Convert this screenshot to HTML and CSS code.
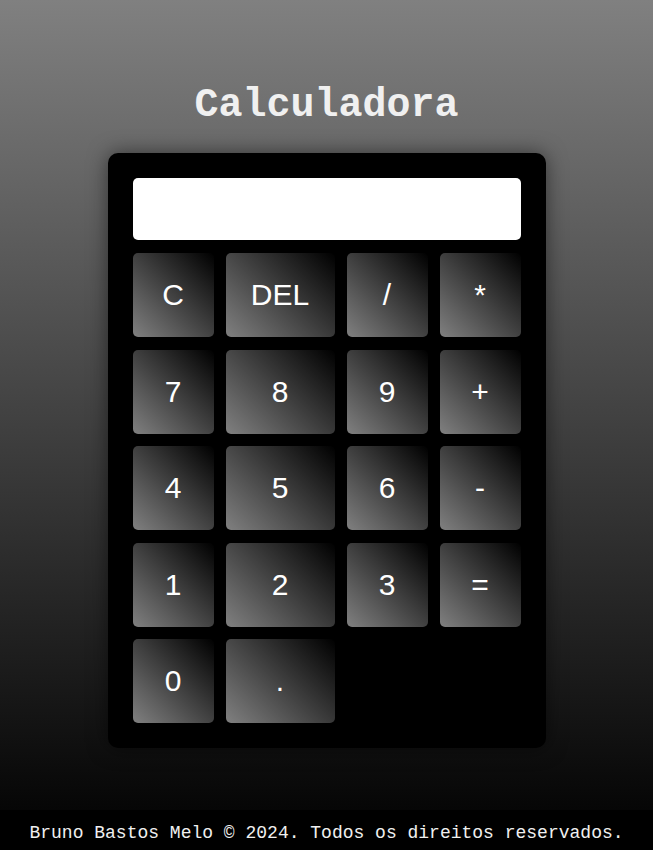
FILE: index.html
```html
<!DOCTYPE html>
<html lang="pt-BR">
<head>
<meta charset="utf-8">
<title>Calculadora</title>
<link rel="stylesheet" href="styles.css">
</head>
<body>
<main class="main">
  <h1 class="title">Calculadora</h1>
  <div class="calc">
    <div class="display"></div>
    <div class="keys">
      <button class="key">C</button>
      <button class="key">DEL</button>
      <button class="key">/</button>
      <button class="key">*</button>
      <button class="key">7</button>
      <button class="key">8</button>
      <button class="key">9</button>
      <button class="key">+</button>
      <button class="key">4</button>
      <button class="key">5</button>
      <button class="key">6</button>
      <button class="key">-</button>
      <button class="key">1</button>
      <button class="key">2</button>
      <button class="key">3</button>
      <button class="key">=</button>
      <button class="key">0</button>
      <button class="key">.</button>
    </div>
  </div>
</main>
<footer class="footer">Bruno Bastos Melo © 2024. Todos os direitos reservados.</footer>
</body>
</html>
```
FILE: styles.css
```css
html, body {
  margin: 0;
  padding: 0;
}
body {
  height: 850px;
  background: linear-gradient(to bottom, #808080, #000000);
  font-family: "Liberation Mono", "Courier New", monospace;
  display: flex;
  flex-direction: column;
  overflow: hidden;
}
.main {
  flex: 1;
  display: flex;
  flex-direction: column;
  align-items: center;
  padding-top: 83px;
}
.title {
  margin: 0 0 25px 0;
  font-size: 40px;
  line-height: 45px;
  font-weight: bold;
  color: #f0f0f0;
}
.calc {
  width: 388px;
  padding: 25px;
  background: #000;
  border-radius: 10px;
  box-shadow: 0 0 20px rgba(0, 0, 0, 0.5);
}
.display {
  height: 62px;
  background: #fff;
  border-radius: 5px;
  margin-bottom: 13px;
}
.keys {
  display: grid;
  grid-template-columns: 81px 109px 81px 81px;
  grid-auto-rows: 84px;
  column-gap: 12px;
  row-gap: 12.5px;
}
.key {
  border: none;
  margin: 0;
  padding: 0;
  border-radius: 5px;
  background: linear-gradient(45deg, #808080, #000000);
  color: #fff;
  font-family: "Liberation Sans", Arial, sans-serif;
  font-size: 30px;
}
.footer {
  height: 40px;
  background: #000;
  color: #f0f0f0;
  font-size: 18px;
  line-height: 47px;
  text-align: center;
}
```
